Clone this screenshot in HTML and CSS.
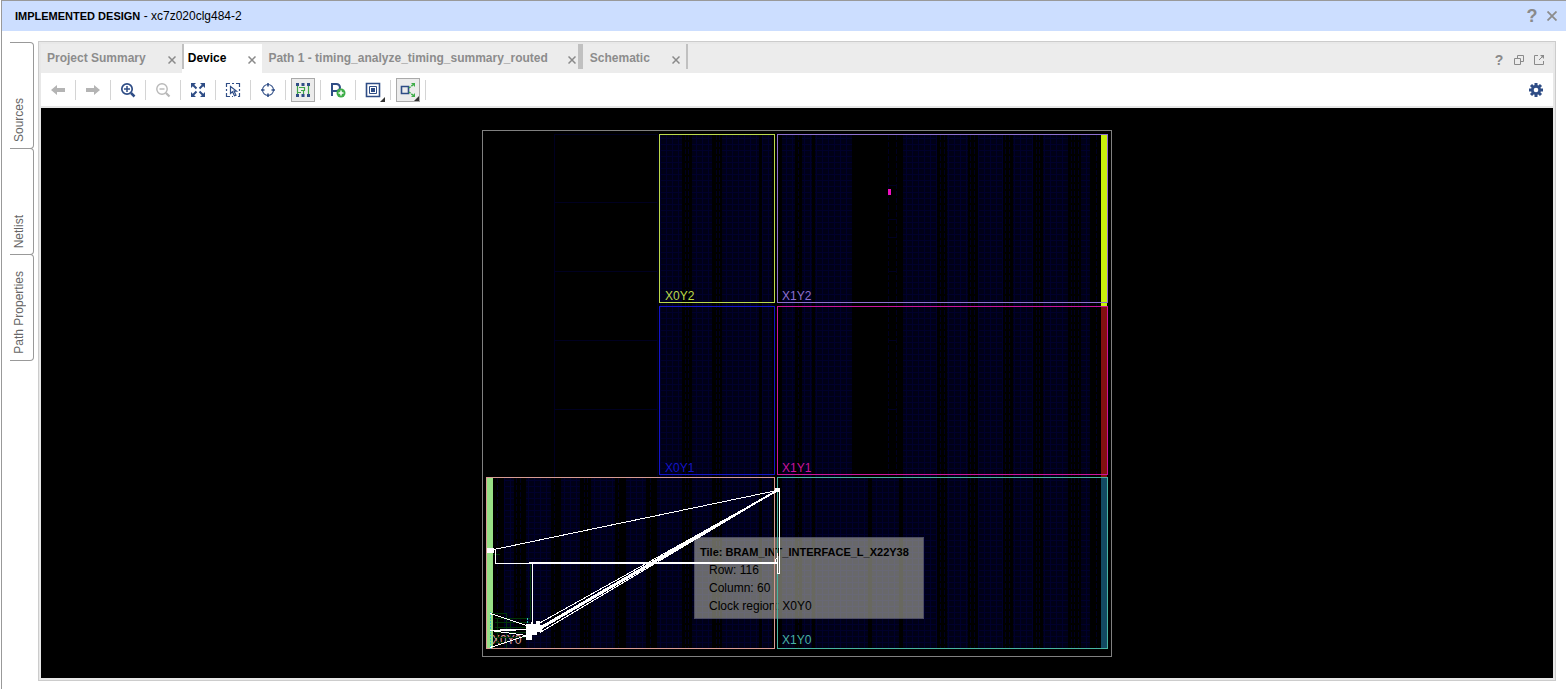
FILE: index.html
```html
<!DOCTYPE html>
<html lang="en">
<head>
<meta charset="utf-8">
<title>Implemented Design - xc7z020clg484-2</title>
<link rel="stylesheet" href="styles.css">
</head>
<body>
<div class="window">
  <header class="titlebar">
    <h1 class="title"><b>IMPLEMENTED DESIGN</b> - xc7z020clg484-2</h1>
    <button class="icon-btn help-lg" aria-label="Help">?</button>
    <button class="icon-btn" aria-label="Close">
      <svg width="10" height="10" viewBox="0 0 10 10"><path d="M.5 .5l9 9M9.500 .5l-9 9" stroke="#8c8c8c" stroke-width="1.800" fill="none"/></svg>
    </button>
  </header>

  <div class="workspace">
    <nav class="side-tabs" aria-label="Side views">
      <button class="side-tab"><span>Sources</span></button>
      <button class="side-tab"><span>Netlist</span></button>
      <button class="side-tab"><span>Path Properties</span></button>
    </nav>

    <main class="panel">
      <div class="tabbar">
        <div class="tab"><button class="tab-name">Project Summary</button><button class="tab-close" aria-label="Close Project Summary"><svg viewBox="0 0 8 8"><path d="M.5 .5l7 7M7.500 .5l-7 7"/></svg></button></div>
        <div class="tab active"><button class="tab-name">Device</button><button class="tab-close" aria-label="Close Device"><svg viewBox="0 0 8 8"><path d="M.5 .5l7 7M7.500 .5l-7 7"/></svg></button></div>
        <div class="tab long"><button class="tab-name">Path 1 - timing_analyze_timing_summary_routed</button><button class="tab-close" aria-label="Close Path 1"><svg viewBox="0 0 8 8"><path d="M.5 .5l7 7M7.500 .5l-7 7"/></svg></button></div>
        <div class="tab split"><button class="tab-name">Schematic</button><button class="tab-close" aria-label="Close Schematic"><svg viewBox="0 0 8 8"><path d="M.5 .5l7 7M7.500 .5l-7 7"/></svg></button></div>
        <div class="tab-end"></div>
        <div class="panel-actions">
          <button class="icon-btn help-sm" aria-label="Help">?</button>
          <button class="icon-btn" aria-label="Restore"><svg width="12" height="12" viewBox="0 0 12 12" fill="none" stroke="#8a8a8a"><path d="M4.500 4.500v-3h6v6h-3M1.500 4.500h6v6h-6z"/></svg></button>
          <button class="icon-btn" aria-label="Float"><svg width="12" height="12" viewBox="0 0 12 12" fill="none" stroke="#8a8a8a"><path d="M5 1.500H1.500v9h9V7M6 6l4-4"/><path d="M7 1h4v4z" fill="#8a8a8a" stroke="none"/></svg></button>
        </div>
      </div>

      <div class="toolbar">
        <div class="slot"><button class="tool" aria-label="Back"><svg viewBox="0 0 16 16"><path fill="#b4b4b4" d="M1 8l6-5v3h8v4H7v3z"/></svg></button></div>
        <div class="slot"><button class="tool" aria-label="Forward"><svg viewBox="0 0 16 16"><path fill="#b4b4b4" d="M15 8L9 3v3H1v4h8v3z"/></svg></button></div>
        <div class="slot"><button class="tool" aria-label="Zoom in"><svg viewBox="0 0 16 16" fill="none" stroke="#2f4d86"><circle cx="7" cy="7" r="5.200" stroke-width="1.700"/><path d="M4 7h6M7 4v6" stroke-width="1.500"/><path d="M11 11l3.500 3.500" stroke-width="2.500"/></svg></button></div>
        <div class="slot"><button class="tool" aria-label="Zoom out"><svg viewBox="0 0 16 16" fill="none" stroke="#b8b8b8"><circle cx="7" cy="7" r="5.200" stroke-width="1.400"/><path d="M4.500 7h5" stroke-width="1.400"/><path d="M11 11l3.500 3.500" stroke-width="2.200"/></svg></button></div>
        <div class="slot"><button class="tool" aria-label="Zoom fit"><svg viewBox="0 0 16 16"><path fill="#2f4d86" d="M1 1h5L1 6zM15 1h-5l5 5zM1 15h5l-5-5zM15 15h-5l5-5z"/><path d="M3 3l3.500 3.500M13 3L9.500 6.500M3 13l3.500-3.500M13 13L9.500 9.500" stroke="#2f4d86" stroke-width="2"/></svg></button></div>
        <div class="slot"><button class="tool" aria-label="Select area"><svg viewBox="0 0 16 16" fill="none" stroke="#2f4d86" stroke-width="1.200"><path d="M1.500 5V1.500H5M7 1.500h2M11 1.500h3.500V5M14.500 7v2M1.500 7v2M1.500 11v3.500H5M7 14.500h1M14.500 11v3.500H13"/><path d="M5.500 4.500v7l2-1.700 2 4 1.500-.7-2-4h2.500z"/></svg></button></div>
        <div class="slot"><button class="tool" aria-label="Autofit selection"><svg viewBox="0 0 16 16" fill="none" stroke="#2f4d86"><circle cx="8" cy="8" r="5.500" stroke-width="1.100"/><path d="M8 1v3.500M8 11.500v3.500M1 8h3.500M11.500 8h3.500" stroke-width="1.600"/></svg></button></div>
        <div class="slot"><button class="tool on" aria-label="Routing resources" aria-pressed="true"><svg viewBox="0 0 16 16"><path fill="none" stroke="#3fa548" stroke-width="1.200" d="M2.500 4v8M13.500 4v8M4 5.500h5.500V8.500H6M8.500 9v3M2.500 10.500H6"/><path fill="#2f4d86" d="M1 1h3v3H1zM6.500 1h3v3h-3zM12 1h3v3h-3zM1 12h3v3H1zM6.500 12h3v3h-3zM12 12h3v3h-3z"/></svg></button></div>
        <div class="slot"><button class="tool" aria-label="Create Pblock"><svg viewBox="0 0 16 16" fill="none"><path stroke="#2f4d86" stroke-width="2" d="M2 14V2h4.500a3 3 0 0 1 0 7H2"/><circle cx="11" cy="11" r="4.500" fill="#3fae49"/><path stroke="#fff" stroke-width="1.500" d="M8.500 11h5M11 8.500v5"/></svg></button></div>
        <div class="slot"><button class="tool menu" aria-label="Cell display"><svg viewBox="0 0 16 16"><path fill="none" stroke="#2f4d86" stroke-width="1.600" d="M1.500 1.500h13v13h-13z"/><path fill="none" stroke="#2f4d86" d="M4.500 4.500h7v7h-7z"/><path fill="#2f4d86" d="M6 6h4v4H6z"/></svg></button></div>
        <div class="slot"><button class="tool menu on" aria-label="Cell connections" aria-pressed="true"><svg viewBox="0 0 16 16"><path fill="none" stroke="#2f4d86" stroke-width="1.600" d="M1.500 4.500h7v7h-7z"/><path stroke="#3fae49" stroke-width="1.500" stroke-dasharray="2 1" d="M9 6l5-4M9 10l5 4"/><path fill="#3fae49" d="M11 1h4v4zM11 15h4v-4z"/></svg></button></div>
        <button class="tool settings" aria-label="Settings"><svg viewBox="0 0 16 16"><path stroke="#2f4d86" stroke-width="3" d="M8 1v14M1 8h14M3 3l10 10M13 3L3 13"/><circle cx="8" cy="8" r="5" fill="#2f4d86"/><circle cx="8" cy="8" r="2.300" fill="#fff"/></svg></button>
      </div>

      <section class="stage" aria-label="Device view">
        <svg class="layer" viewBox="41 108 1512 570" shape-rendering="crispEdges">
          <defs>
            <pattern id="grid" width="6" height="6" patternUnits="userSpaceOnUse">
              <rect width="6" height="6" fill="#000017"/>
              <path d="M0 .5h6M.5 0v6" stroke="#00002c"/>
            </pattern>
          </defs>
          <g fill="url(#grid)">
            <path d="M660 135h22v513h-22zM692 135h20v513h-20zM722 135h37v513h-37zM762 135h10v513h-10zM782 135h13v513h-13zM802 135h10v513h-10zM815 135h37v513h-37zM903 135h34v513h-34zM947 135h21v513h-21zM978 135h25v513h-25zM1013 135h20v513h-20zM1043 135h25v513h-25zM1081 135h9v513h-9z"/>
            <path d="M504 478h10v170h-10zM526 478h25v170h-25zM561 478h19v170h-19zM591 478h24v170h-24zM626 478h20v170h-20zM657 478h4v170h-4zM852 478h16v170h-16zM872 478h27v170h-27z"/>
          </g>
          <g stroke="#000020" fill="none">
            <path d="M554.500 134v344M657.500 134v344M554 134.500h103M554 202.500h103M554 271.500h103M554 340.500h103M554 409.500h103"/>
            <path stroke-dasharray="5 2" d="M685.500 135v513M688.500 135v513M716.500 135v513M719.500 135v513M798.500 135v513M888.500 135v342M896.500 135v342M940.500 135v513M944.500 135v513M970.500 135v513M974.500 135v513M1005.500 135v513M1009.500 135v513M1036.500 135v513M1039.500 135v513M1071.500 135v513M1074.500 135v513M1078.500 135v513M1096.500 135v513M497.500 478v170M516.500 478v170M520.500 478v170M554.500 478v170M584.500 478v170M587.500 478v170M618.500 478v170M650.500 478v170"/>
            <path d="M888 185.500h8M888 219.500h8M888 237.500h8M888 271.500h8M888 340.500h8M888 409.500h8"/>
          </g>
          <path fill="#f010c0" d="M888 189h3v6h-3z"/>
          <path fill="#c8f00c" d="M1101 135h6v171h-6z"/>
          <path fill="#82100f" d="M1101 307h6v170h-6z"/>
          <path fill="#124a62" d="M1101 478h6v170h-6z"/>
          <path fill="#98e086" d="M487 478h6v170h-6z"/>
          <path fill="none" stroke="#808080" d="M482.500 130.500h629v526h-629z"/>
        </svg>

        <div class="tooltip" role="tooltip">
          <strong>Tile: BRAM_INT_INTERFACE_L_X22Y38</strong>
          <span>Row: 116</span>
          <span>Column: 60</span>
          <span>Clock region: X0Y0</span>
        </div>

        <svg class="layer" viewBox="41 108 1512 570" shape-rendering="crispEdges">
          <g fill="none">
            <path stroke="#bcd94c" d="M659.500 134.500h115v168h-115z"/>
            <path stroke="#8f70d0" d="M777.500 134.500h330v168h-330z"/>
            <path stroke="#1414c8" d="M659.500 306.500h115v168h-115z"/>
            <path stroke="#cc149c" d="M777.500 306.500h330v168h-330z"/>
            <path stroke="#d89c94" d="M486.500 477.500h288v171h-288z"/>
            <path stroke="#48b4a0" d="M777.500 477.500h330v171h-330z"/>
          </g>
          <g class="region-label">
            <text x="665" y="300" fill="#bcd94c">X0Y2</text>
            <text x="782" y="300" fill="#8f70d0">X1Y2</text>
            <text x="665" y="472" fill="#1414c8">X0Y1</text>
            <text x="782" y="472" fill="#cc149c">X1Y1</text>
            <text x="492" y="644" fill="#d89c94">X0Y0</text>
            <text x="782" y="644" fill="#48b4a0">X1Y0</text>
          </g>
          <g fill="none" stroke="#003406">
            <path d="M491 613.500h15v34M495 618.500h35M495 622.500h35M495 627.500h36M497.500 618v24M495 632.500h32M495 637.500h30M510.500 618v20M495 642.500h12M530.500 564v56M493 554.500h7"/>
          </g>
          <path stroke="#30c0c0" stroke-dasharray="2 1" d="M490.500 612v37M527.500 618v6" fill="none"/>
          <g fill="none" stroke="#fff">
            <path d="M494 549.500L777 490.500M495.500 550v13.500H532M532.500 563v65M779.500 490v83h-2v-20M775.500 563v-3l2-3M490 613.500l40 13M490 630.500l15 0 22-1M490 630.500l15 2 22 3M490 647.500l37-12M537 624.500L777 490.500M540 632.500L777 490.500M500 629.500h27"/>
            <path stroke-width="2" d="M529 563h248"/>
            <path stroke-width="3" d="M537 630L700 535"/>
            <path stroke-width="2" d="M700 535L777 490.500"/>
          </g>
          <path fill="#fff" d="M487 548h7v5h-7zM775 488h5v4h-5zM526 624h5v-2h2v2h3v-3h4v4h2v7h-5v3h-5v5h-6z"/>
        </svg>
      </section>
    </main>
  </div>
</div>
</body>
</html>
```

FILE: styles.css
```css
* { box-sizing: border-box; }

body {
  margin: 0;
  background: #fff;
  color: #000;
  font: 12px/18px "Liberation Sans", Arial, sans-serif;
}

button {
  margin: 0;
  padding: 0;
  border: 0;
  background: none;
  color: inherit;
  font: inherit;
  cursor: pointer;
}

svg { display: block; }

.window {
  display: flex;
  flex-direction: column;
  min-height: 100vh;
  margin-left: 1px;
  border-left: 1px solid #999;
  border-top: 1px solid #999;
}

.titlebar {
  display: flex;
  align-items: center;
  gap: 8px;
  height: 30px;
  padding: 0 8px 0 13px;
  background: #ccdeff;
}

.title {
  flex: 1;
  margin: 0;
  font-size: 12px;
  font-weight: normal;
}

.title b { font-size: 11px; }

.icon-btn {
  display: grid;
  place-items: center;
  min-width: 12px;
  color: #8a8a8a;
  font-weight: bold;
}

.help-lg { font-size: 18px; }
.help-sm { font-size: 14px; }

.workspace {
  display: flex;
  flex: 1;
  gap: 4px;
  padding: 10px 10px 8px 8px;
}

.side-tabs {
  display: flex;
  flex-direction: column;
  width: 24px;
  padding-top: 1px;
}

.side-tab {
  display: flex;
  align-items: flex-end;
  justify-content: center;
  min-height: 107px;
  margin-bottom: -1px;
  padding: 6px 6px 6px 0;
  border: 1px solid #999;
  border-left: 0;
  border-radius: 0 4px 4px 0;
  color: #666;
}

.side-tab span {
  writing-mode: vertical-rl;
  transform: rotate(180deg);
}

.panel {
  display: flex;
  flex: 1;
  flex-direction: column;
  min-width: 0;
  border: 1px solid #ccc;
  outline: 2px solid #e8e8e8;
  outline-offset: -3px;
  padding: 2px;
}

.tabbar {
  display: flex;
  height: 29px;
  background: #ececec;
}

.tab {
  display: flex;
  align-items: center;
  gap: 21px;
  padding: 0 5px 0 6px;
  color: #8c8c8c;
  font-weight: bold;
  white-space: nowrap;
}

.tab-name { padding-bottom: 2px; }

.tab-close { padding: 3px 1px 0; }

.tab-close svg {
  width: 8px;
  height: 8px;
  fill: none;
  stroke: #8a8a8a;
  stroke-width: 1.5;
}

.tab.active {
  background: linear-gradient(#c0c0c0, #c0c0c0) left top / 2px 25px no-repeat #fff;
  color: #000;
}

.tab.long {
  gap: 19px;
  padding-right: 1px;
}

.tab.split {
  padding-left: 12px;
  background: linear-gradient(#c0c0c0, #c0c0c0) left top / 5px 25px no-repeat;
}

.tab-end {
  width: 2px;
  height: 25px;
  background: #c0c0c0;
}

.panel-actions {
  display: flex;
  align-items: center;
  gap: 8px;
  margin-left: auto;
  padding: 3px 8px 0 0;
}

.toolbar {
  display: flex;
  align-items: center;
  height: 35px;
  border-bottom: 2px solid #e6e6e6;
}

.slot {
  display: flex;
  align-items: center;
  justify-content: center;
  width: 35px;
  height: 20px;
  border-right: 1px solid #d4d4d4;
}

.tool {
  position: relative;
  display: grid;
  flex: none;
  place-items: center;
  width: 24px;
  height: 24px;
}

.tool svg {
  width: 16px;
  height: 16px;
}

.tool.on {
  border: 1px solid #aaa;
  background: #ececec;
}

.tool.menu::after {
  content: "";
  position: absolute;
  right: 0;
  bottom: 0;
  border-left: 5px solid transparent;
  border-bottom: 5px solid #333;
}

.settings {
  margin-left: auto;
  margin-right: 5px;
}

.stage {
  position: relative;
  flex: 1;
  min-height: 320px;
  background: #000;
}

.layer {
  position: absolute;
  inset: 0;
  width: 100%;
  height: 100%;
}

.region-label { font-size: 12px; }

.tooltip {
  position: absolute;
  left: 653px;
  top: 429px;
  display: flex;
  flex-direction: column;
  padding: 5px 7px 3px 5px;
  border: 1px solid rgba(60, 60, 90, 0.6);
  background: rgba(208, 208, 190, 0.5);
  white-space: nowrap;
}

.tooltip strong { padding-right: 7px; font-size: 11px; }
.tooltip span { padding-left: 9px; }
```
